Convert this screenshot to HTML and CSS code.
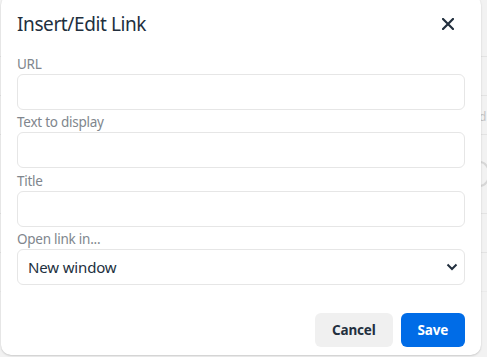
FILE: index.html
```html
<!DOCTYPE html>
<html lang="en">
<head>
    <meta charset="UTF-8">
    <meta name="viewport" content="width=device-width, initial-scale=1.0">
    <title>Insert/Edit Link</title>
    <link rel="stylesheet" href="styles.css">
</head>
<body>
    <div class="page">
        <div class="row row-top"></div>
        <div class="row"></div>
        <div class="row"><span class="cell-text">d</span></div>
        <div class="row row-tall"><span class="cell-circle"></span></div>
        <div class="row"></div>
        <div class="row row-faint"></div>
    </div>

    <div class="dialog">
        <div class="dialog-header">
            <h1 class="dialog-title">Insert/Edit Link</h1>
            <button class="close-btn" title="Close">
                <svg width="12" height="12" viewBox="0 0 12 12">
                    <path d="M1 1 L11 11 M11 1 L1 11" stroke="#222f3e" stroke-width="2.2" stroke-linecap="square" fill="none"/>
                </svg>
            </button>
        </div>

        <div class="dialog-body">
            <div class="field">
                <label for="url">URL</label>
                <input type="text" id="url">
            </div>
            <div class="field">
                <label for="text">Text to display</label>
                <input type="text" id="text">
            </div>
            <div class="field">
                <label for="title">Title</label>
                <input type="text" id="title">
            </div>
            <div class="field">
                <label for="target">Open link in...</label>
                <div class="select-wrap">
                    <select id="target">
                        <option>New window</option>
                        <option>Current window</option>
                    </select>
                    <svg class="chevron" width="12" height="8" viewBox="0 0 12 8">
                        <path d="M1.5 1.5 L6 6 L10.5 1.5" stroke="#222f3e" stroke-width="2" fill="none"/>
                    </svg>
                </div>
            </div>
        </div>

        <div class="dialog-footer">
            <button class="btn btn-secondary">Cancel</button>
            <button class="btn btn-primary">Save</button>
        </div>
    </div>
</body>
</html>
```

FILE: styles.css
```css
body {
    margin: 0;
    padding: 0;
    height: 357px;
    overflow: hidden;
    background: #f2f2f2;
    font-family: "Noto Sans", "Open Sans", sans-serif;
    color: #222f3e;
}
.page {
    display: flex;
    flex-direction: column;
}
.row {
    height: 38px;
    border-bottom: 1px solid #e3e3e3;
    position: relative;
}
.row-top {
    height: 56px;
}
.row-tall {
    height: 78px;
}
.row-faint {
    border-bottom-color: #ebebeb;
}
.cell-text {
    position: absolute;
    left: 479px;
    top: 12px;
    font-size: 12px;
    color: #c4c4c4;
}
.cell-circle {
    position: absolute;
    left: 470px;
    top: 26px;
    width: 16px;
    height: 22px;
    border: 2px solid #d6d6d6;
    border-radius: 50%;
}
.dialog {
    position: absolute;
    left: 1px;
    top: -5px;
    width: 480px;
    height: 360px;
    background: white;
    border-radius: 10px;
    box-shadow: 0 1px 2px rgba(0, 0, 0, 0.15), 0 0 1px rgba(0, 0, 0, 0.1);
    display: flex;
    flex-direction: column;
    box-sizing: border-box;
    padding: 5px 16px 0 16px;
}
.dialog-header {
    height: 48px;
    display: flex;
    align-items: center;
    justify-content: space-between;
}
.dialog-title {
    margin: 0;
    font-size: 19px;
    letter-spacing: -0.4px;
    font-weight: 400;
    line-height: 28px;
    color: #222f3e;
}
.close-btn {
    width: 34px;
    height: 34px;
    border: none;
    background: none;
    padding: 0;
    display: flex;
    align-items: center;
    justify-content: center;
    cursor: pointer;
}
.dialog-body {
    padding-top: 6px;
    display: flex;
    flex-direction: column;
    gap: 2.33px;
}
.field {
    display: flex;
    flex-direction: column;
}
label {
    font-size: 13.5px;
    letter-spacing: -0.25px;
    line-height: 20px;
    color: #80868d;
}
input, select {
    height: 36px;
    box-sizing: border-box;
    border: 1px solid #e6e6e6;
    border-radius: 6px;
    background: white;
    font-family: inherit;
    font-size: 15px;
    letter-spacing: -0.15px;
    color: #222f3e;
    outline: none;
}
.select-wrap {
    position: relative;
}
select {
    width: 100%;
    appearance: none;
    padding: 0 10px;
}
.chevron {
    position: absolute;
    right: 7px;
    top: 14px;
    pointer-events: none;
}
.dialog-footer {
    display: flex;
    justify-content: flex-end;
    gap: 8px;
    padding-top: 28px;
}
.btn {
    height: 34px;
    padding: 0 17px;
    border: none;
    border-radius: 6px;
    font-family: inherit;
    font-size: 13.5px;
    letter-spacing: -0.2px;
    font-weight: 700;
    cursor: pointer;
}
.btn-secondary {
    background: #f0f0f0;
    color: #222f3e;
}
.btn-primary {
    background: #006ce7;
    color: white;
}
```
